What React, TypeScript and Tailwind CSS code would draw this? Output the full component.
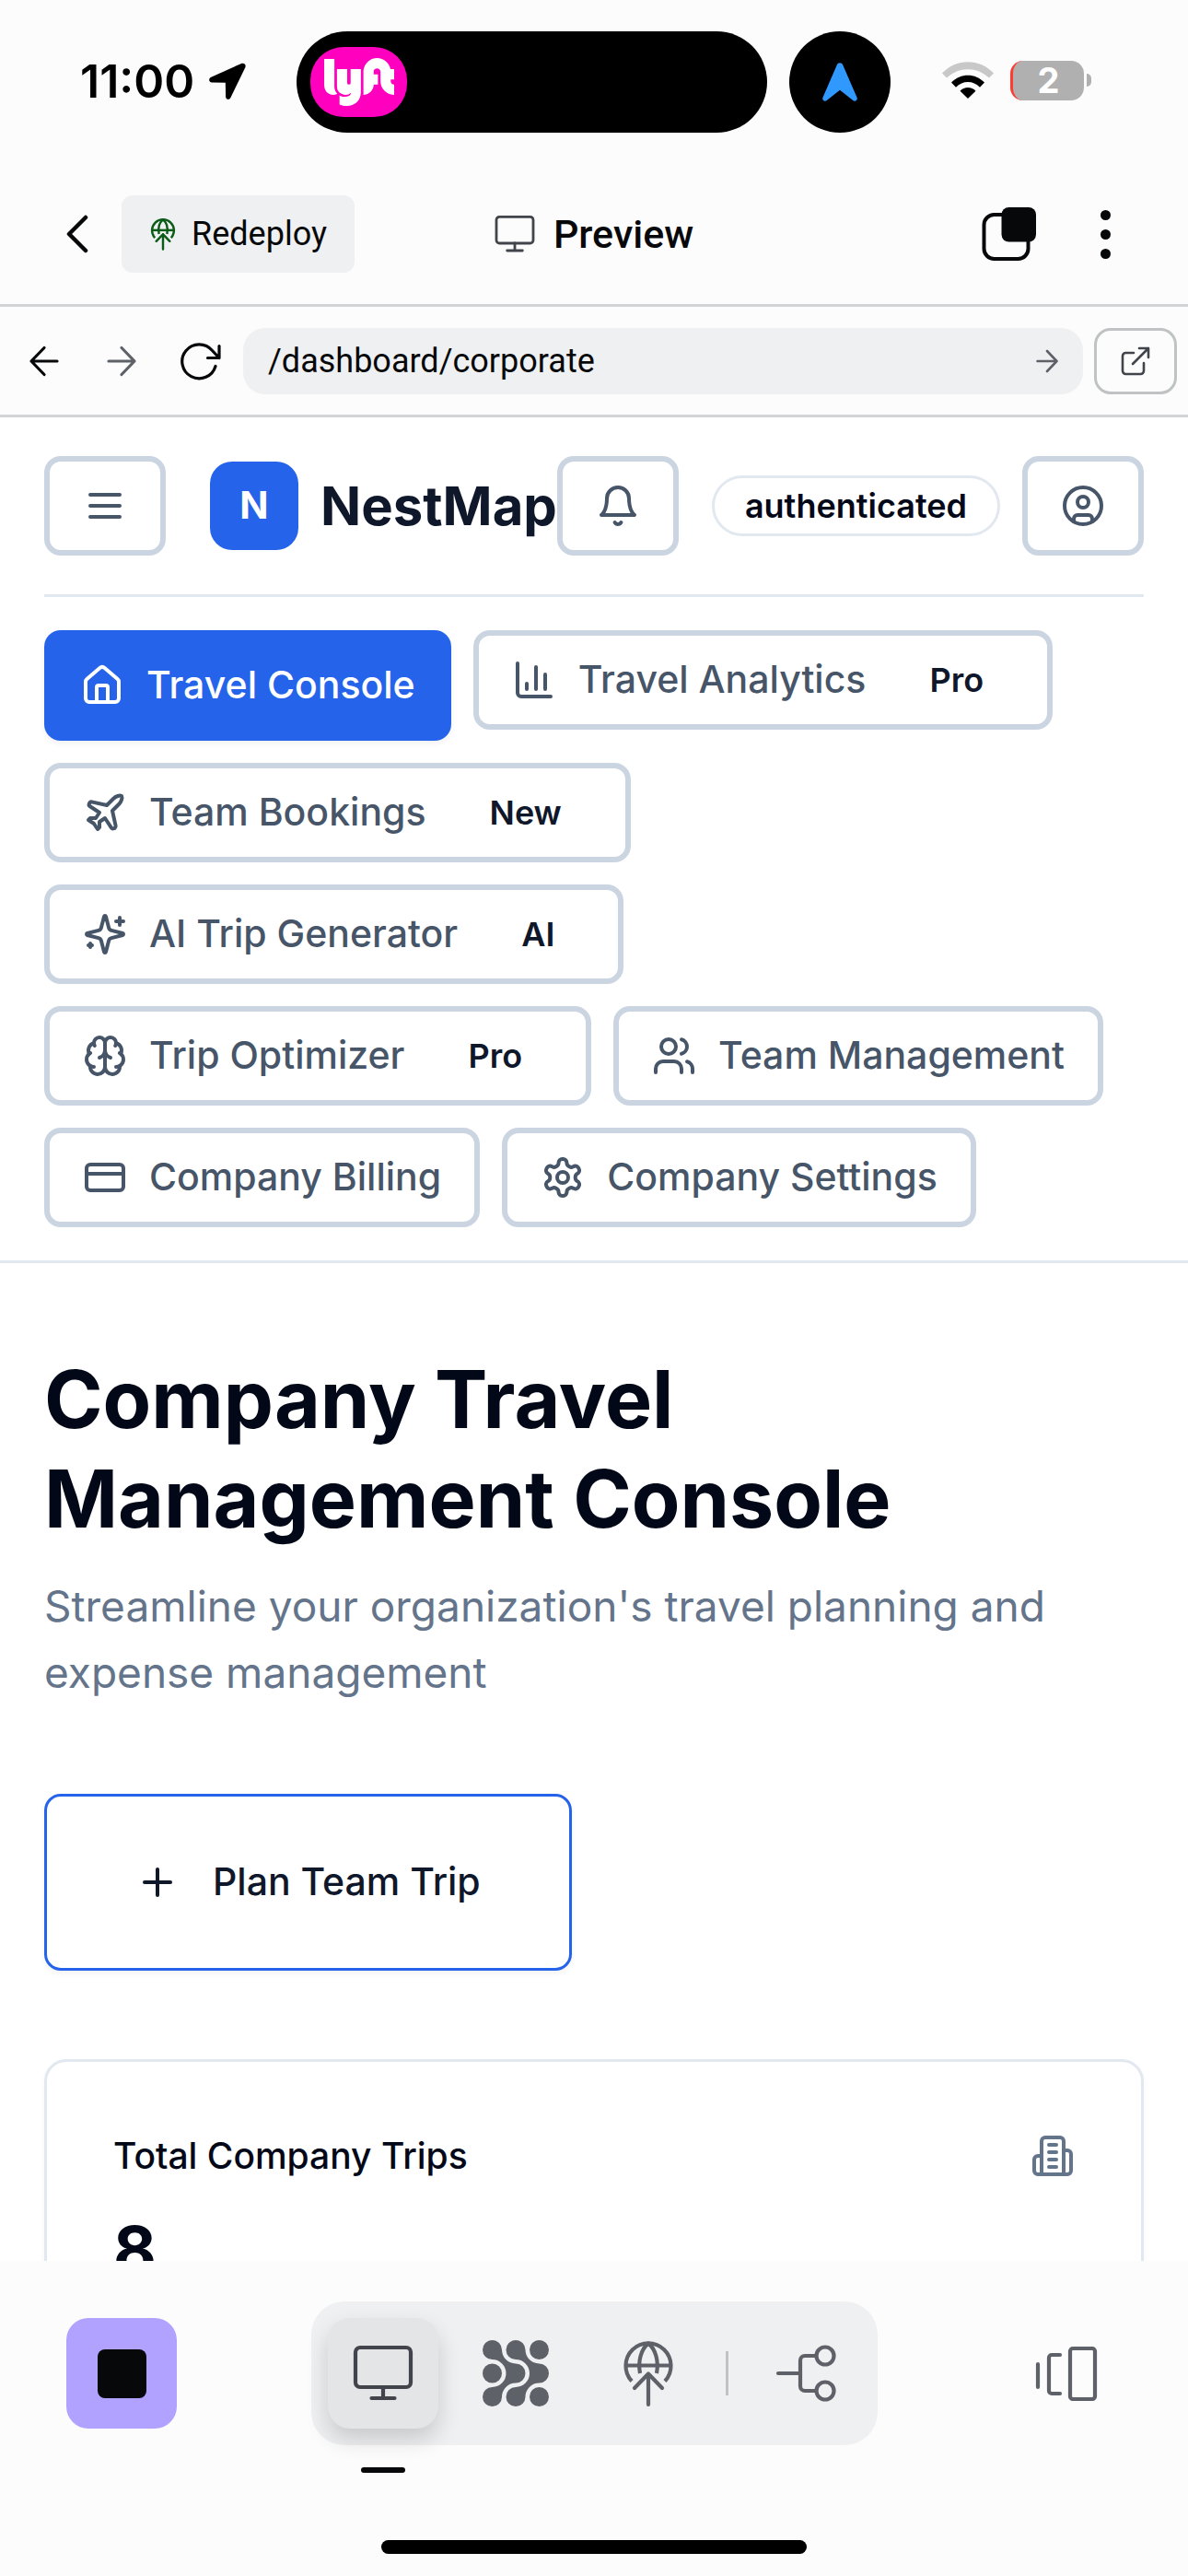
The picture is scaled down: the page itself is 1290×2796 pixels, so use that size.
import React from 'react';
import { House, Plane, Users, CreditCard, CircleUser, Plus } from 'lucide-react';
import { SiLyft } from 'react-icons/si';

const stroke = {
  fill: 'none',
  stroke: 'currentColor',
  strokeLinecap: 'round' as const,
  strokeLinejoin: 'round' as const,
};

function MonitorIcon({ className }: { className: string }) {
  return (
    <svg viewBox="0 0 66 62" className={className} {...stroke} strokeWidth="4.2" aria-hidden="true">
      <rect x="3" y="3" width="60" height="43" rx="5" />
      <path d="M33 46v12M20.500 58h25" />
    </svg>
  );
}

function DeployIcon({ className, width }: { className: string; width: number }) {
  return (
    <svg viewBox="0 0 56 74" className={className} {...stroke} strokeWidth={width} aria-hidden="true">
      <path d="M10 45.500A24.500 24.500 0 1 1 46 45.500" strokeLinecap="butt" />
      <path d="M4 28.500h48" strokeLinecap="butt" />
      <path d="M19 37C16.500 24 20 11 28 4.500C36 11 39.500 24 37 37" strokeLinecap="butt" />
      <path d="M28 71V37.500M13 53l15-15.500L43 53" />
    </svg>
  );
}

function LocationArrow() {
  return (
    <svg viewBox="0 0 40 40" className="size-10" fill="currentColor" aria-hidden="true">
      <path d="M34.500 1.200 2.200 15.800C-.8 17.200-.4 21.300 3 21.500l14.800.3.300 15.200c.1 3.200 3.900 3.900 5.300 1L39.300 5.200C40.700 2 37.700-.3 34.500 1.200Z" />
    </svg>
  );
}

function WifiIcon() {
  return (
    <svg viewBox="0 0 56 40" className="h-10 w-14" aria-hidden="true">
      <path d="M0 12.500C15-4 41-4 56 12.500l-5 5C38 5 18 5 5 17.500Z" fill="#c8c8c8" />
      <path d="M10 22.500C20 12 36 12 46 22.500l-5 5.200C34 20 22 20 15 27.700Z" fill="#000" />
      <path d="M19.500 31.800c4.500-5 12.500-5 17 0L28 40Z" fill="#000" />
    </svg>
  );
}

function StatusBar() {
  return (
    <div className="flex h-[178px] items-start pt-[34px] pl-[87px]">
      <div className="flex h-[108px] w-[235px] items-center gap-4">
        <span className="font-[Inter] text-[50px] leading-none font-semibold">11:00</span>
        <LocationArrow />
      </div>
      <div className="flex h-[110px] w-[511px] items-center rounded-full bg-black pl-[15px]">
        <span className="flex h-[76px] w-[105px] items-center justify-center rounded-[36px] bg-[#ff00bf] text-white">
          <SiLyft className="size-[76px]" aria-label="Lyft" />
        </span>
      </div>
      <div className="ml-6 flex size-[110px] items-center justify-center rounded-full bg-black">
        <svg viewBox="0 0 38 42" className="h-[42px] w-[38px]" fill="#3099ff" aria-hidden="true">
          <path d="M15.800 2.600c1-3.200 5.400-3.200 6.400 0L37.600 38c1 2.800-2.200 4.800-4.300 2.900L19 29.800 4.700 40.900C2.600 42.800-.6 40.800.4 38Z" />
        </svg>
      </div>
      <div className="ml-14 flex h-[106px] items-center">
        <WifiIcon />
        <span className="ml-[18px] flex h-[43px] w-20 items-center justify-center rounded-[14px] border-l-[3px] border-[#ff3b30] bg-[#b0b0b0] font-[Inter] text-[38px] leading-none font-bold text-white">2</span>
        <span className="ml-[3px] h-[14px] w-[5px] rounded-r-full bg-[#b0b0b0]" />
      </div>
    </div>
  );
}

function TitleBar() {
  return (
    <header className="grid h-[152px] grid-cols-3 items-center px-[72px] font-[Roboto] text-[#07080a]">
      <div className="flex items-center gap-9">
        <button type="button" aria-label="Back">
          <svg viewBox="0 0 24 42" className="h-[42px] w-6" {...stroke} strokeWidth="4.500" aria-hidden="true">
            <path d="M21 3 3 21l18 18" />
          </svg>
        </button>
        <button type="button" className="flex h-[84px] items-center gap-4 rounded-xl bg-[#eff0f2] px-[30px] text-4xl">
          <DeployIcon className="h-9 w-[30px] text-[#0b5c16]" width={5} />
          Redeploy
        </button>
      </div>
      <h1 className="flex items-center justify-center gap-5 text-[43px] font-medium">
        <MonitorIcon className="h-[42px] w-[44px] text-[#42444c]" />
        Preview
      </h1>
      <div className="flex items-center justify-end gap-14">
        <button type="button" aria-label="Tabs">
          <svg viewBox="0 0 60 60" className="size-[60px]" aria-hidden="true">
            <rect x="2.500" y="9" width="48" height="48" rx="11" {...stroke} strokeWidth="4" />
            <rect x="21.500" y="1" width="37.500" height="37.500" rx="8" fill="currentColor" />
          </svg>
        </button>
        <button type="button" aria-label="More options" className="flex w-9 flex-col items-center gap-[10px]">
          <span className="size-[11px] rounded-full bg-current" />
          <span className="size-[11px] rounded-full bg-current" />
          <span className="size-[11px] rounded-full bg-current" />
        </button>
      </div>
    </header>
  );
}

function AddressBar() {
  return (
    <form className="flex h-[123px] items-center border-y-[3px] border-[#d2d4d6] pr-3 pl-[30px] text-[#07080a]" onSubmit={(e) => e.preventDefault()}>
      <button type="button" aria-label="Go back">
        <svg viewBox="0 0 36 36" className="size-9" {...stroke} strokeWidth="3.200" aria-hidden="true">
          <path d="M32 18H4M18 3.500 4 18l14 14.500" />
        </svg>
      </button>
      <button type="button" aria-label="Go forward" className="ml-12 text-[#5f6169]">
        <svg viewBox="0 0 36 36" className="size-9" {...stroke} strokeWidth="3.200" aria-hidden="true">
          <path d="M4 18h28M18 3.500 32 18 18 32.500" />
        </svg>
      </button>
      <button type="button" aria-label="Reload" className="ml-[45px]">
        <svg viewBox="0 0 45 42" className="h-[42px] w-[45px]" {...stroke} strokeWidth="3.200" aria-hidden="true">
          <path d="M39 26.500A18.500 18.500 0 1 1 35.500 9.500L43 17.500M43 4.500v13H30.500" />
        </svg>
      </button>
      <div className="ml-6 flex h-[72px] min-w-0 flex-1 items-center rounded-3xl bg-[#eff0f2] px-[27px]">
        <input type="text" aria-label="Page address" defaultValue="/dashboard/corporate" className="h-[72px] min-w-0 flex-1 bg-transparent font-[Roboto] text-4xl outline-none" />
        <button type="submit" aria-label="Go">
          <svg viewBox="0 0 24 26" className="h-[26px] w-6 text-[#5f6169]" {...stroke} strokeWidth="2.600" aria-hidden="true">
            <path d="M1.500 13h21M12 2l10.500 11L12 24" />
          </svg>
        </button>
      </div>
      <button type="button" aria-label="Open in new tab" className="ml-3 flex h-[72px] w-[90px] items-center justify-center rounded-[18px] border-[3px] border-[#bfc3c3] text-[#42444c]">
        <svg viewBox="0 0 32 32" className="size-8" {...stroke} strokeWidth="2.600" aria-hidden="true">
          <path d="M14 7H5.500A3.500 3.500 0 0 0 2 10.500v16A3.500 3.500 0 0 0 5.500 30h16a3.500 3.500 0 0 0 3.500-3.500V18M13 19 30 2M20 2h10v10" />
        </svg>
      </button>
    </form>
  );
}

type IconProps = { className?: string };

function LineIcon({ className, children }: IconProps & { children: React.ReactNode }) {
  return (
    <svg viewBox="0 0 24 24" className={className} {...stroke} strokeWidth="2" aria-hidden="true">
      {children}
    </svg>
  );
}

const MenuIcon = ({ className }: IconProps) => (
  <LineIcon className={className}>
    <path d="M4 6h16M4 12h16M4 18h16" />
  </LineIcon>
);

const BellIcon = ({ className }: IconProps) => (
  <LineIcon className={className}>
    <path d="M6 8a6 6 0 0 1 12 0c0 7 3 9 3 9H3s3-2 3-9" />
    <path d="M10.300 21a1.940 1.940 0 0 0 3.400 0" />
  </LineIcon>
);

const AnalyticsIcon = ({ className }: IconProps) => (
  <LineIcon className={className}>
    <path d="M3 3v16a2 2 0 0 0 2 2h16M18 17V9M13 17V5M8 17v-3" />
  </LineIcon>
);

const SparklesIcon = ({ className }: IconProps) => (
  <LineIcon className={className}>
    <path d="M9.937 15.500A2 2 0 0 0 8.500 14.063l-6.135-1.582a.5.5 0 0 1 0-.962L8.500 9.936A2 2 0 0 0 9.937 8.500l1.582-6.135a.5.5 0 0 1 .963 0L14.063 8.500A2 2 0 0 0 15.500 9.937l6.135 1.581a.5.5 0 0 1 0 .964L15.500 14.063a2 2 0 0 0-1.437 1.437l-1.582 6.135a.5.5 0 0 1-.963 0z" />
    <path d="M20 3v4M22 5h-4M4 17v2M5 18H3" />
  </LineIcon>
);

const BrainIcon = ({ className }: IconProps) => (
  <LineIcon className={className}>
    <path d="M12 5a3 3 0 1 0-5.997.125 4 4 0 0 0-2.526 5.770 4 4 0 0 0 .556 6.588A4 4 0 1 0 12 18Z" />
    <path d="M12 5a3 3 0 1 1 5.997.125 4 4 0 0 1 2.526 5.770 4 4 0 0 1-.556 6.588A4 4 0 1 1 12 18Z" />
    <path d="M15 13a4.500 4.500 0 0 1-3-4 4.500 4.500 0 0 1-3 4" />
    <path d="M17.599 6.500a3 3 0 0 0 .399-1.375M6.003 5.125A3 3 0 0 0 6.401 6.500M3.477 10.896a4 4 0 0 1 .585-.396M19.938 10.500a4 4 0 0 1 .585.396M6 18a4 4 0 0 1-1.967-.516M19.967 17.484A4 4 0 0 1 18 18" />
  </LineIcon>
);

const SettingsIcon = ({ className }: IconProps) => (
  <LineIcon className={className}>
    <path d="M12.220 2h-.44a2 2 0 0 0-2 2v.18a2 2 0 0 1-1 1.730l-.43.25a2 2 0 0 1-2 0l-.15-.08a2 2 0 0 0-2.730.73l-.22.38a2 2 0 0 0 .73 2.730l.15.1a2 2 0 0 1 1 1.720v.51a2 2 0 0 1-1 1.740l-.15.09a2 2 0 0 0-.73 2.730l.22.38a2 2 0 0 0 2.730.73l.15-.08a2 2 0 0 1 2 0l.43.25a2 2 0 0 1 1 1.730V20a2 2 0 0 0 2 2h.44a2 2 0 0 0 2-2v-.18a2 2 0 0 1 1-1.730l.43-.25a2 2 0 0 1 2 0l.15.08a2 2 0 0 0 2.730-.73l.22-.39a2 2 0 0 0-.73-2.730l-.15-.08a2 2 0 0 1-1-1.740v-.5a2 2 0 0 1 1-1.740l.15-.09a2 2 0 0 0 .73-2.730l-.22-.38a2 2 0 0 0-2.730-.73l-.15.08a2 2 0 0 1-2 0l-.43-.25a2 2 0 0 1-1-1.730V4a2 2 0 0 0-2-2z" />
    <circle cx="12" cy="12" r="3" />
  </LineIcon>
);

const BuildingIcon = ({ className }: IconProps) => (
  <LineIcon className={className}>
    <path d="M6 22V4a2 2 0 0 1 2-2h8a2 2 0 0 1 2 2v18Z" />
    <path d="M6 12H4a2 2 0 0 0-2 2v6a2 2 0 0 0 2 2h2M18 9h2a2 2 0 0 1 2 2v9a2 2 0 0 1-2 2h-2" />
    <path d="M10 6h4M10 10h4M10 14h4M10 18h4" />
  </LineIcon>
);

const squareButton =
  'flex h-[108px] w-[132px] shrink-0 items-center justify-center rounded-[18px] border-6 border-[#cbd5e1] text-[#475569]';

function AppHeader() {
  return (
    <div className="mx-12 flex items-center border-b-[3px] border-[#e2e8f0] py-[42px]">
      <button type="button" aria-label="Open menu" className={squareButton}>
        <MenuIcon className="size-12" />
      </button>
      <span className="ml-12 flex size-24 shrink-0 items-center justify-center rounded-3xl bg-[#2563eb] text-[41px] font-bold text-white">N</span>
      <span className="ml-6 min-w-0 flex-1 text-[58px] leading-[84px] font-bold text-[#0f172a]">NestMap</span>
      <button type="button" aria-label="Notifications" className={squareButton}>
        <BellIcon className="size-12" />
      </button>
      <span className="ml-9 flex h-[66px] items-center rounded-full border-[3px] border-[#e2e8f0] px-[33px] text-4xl font-semibold text-[#020817]">authenticated</span>
      <button type="button" aria-label="Account" className={`ml-6 ${squareButton}`}>
        <CircleUser className="size-12" />
      </button>
    </div>
  );
}

type NavItem = { label: string; icon: React.ComponentType<IconProps>; badge?: string; active?: boolean };

const navItems: NavItem[] = [
  { label: 'Travel Console', icon: House, active: true },
  { label: 'Travel Analytics', icon: AnalyticsIcon, badge: 'Pro' },
  { label: 'Team Bookings', icon: Plane, badge: 'New' },
  { label: 'AI Trip Generator', icon: SparklesIcon, badge: 'AI' },
  { label: 'Trip Optimizer', icon: BrainIcon, badge: 'Pro' },
  { label: 'Team Management', icon: Users },
  { label: 'Company Billing', icon: CreditCard },
  { label: 'Company Settings', icon: SettingsIcon },
];

function Nav() {
  return (
    <nav className="flex flex-wrap items-start gap-6 border-b-[3px] border-[#e2e8f0] px-12 py-9">
      {navItems.map(({ label, icon: Icon, badge, active }) => (
        <button
          key={label}
          type="button"
          aria-current={active ? 'page' : undefined}
          className={
            active
              ? 'flex h-[120px] items-center gap-6 rounded-[18px] bg-[#2563eb] px-[39px] text-[41px] font-medium text-white shadow-[0_3px_6px_rgba(0,0,0,0.06)]'
              : 'flex h-[108px] items-center gap-6 rounded-[18px] border-6 border-[#cbd5e1] px-9 text-[41px] font-medium text-[#475569]'
          }
        >
          <Icon className="size-12" />
          {label}
          {badge && <span className="ml-3 px-[33px] text-4xl font-semibold text-[#0f172a]">{badge}</span>}
        </button>
      ))}
    </nav>
  );
}

function Content() {
  return (
    <main className="min-h-0 flex-1 overflow-hidden px-12 pt-[94px]">
      <h2 className="max-w-[1000px] text-[86px] leading-[108px] font-bold text-[#020817]">
        Company Travel Management Console
      </h2>
      <p className="mt-[26px] text-[46px] leading-[72px] text-[#64748b]">
        Streamline your organization&apos;s travel planning and expense management
      </p>
      <button type="button" className="mt-24 flex h-48 items-center gap-9 rounded-[18px] border-[3px] border-[#2563eb] px-24 text-[41px] font-medium text-[#0f172a] shadow-[0_3px_6px_rgba(0,0,0,0.05)]">
        <Plus className="size-12" />
        Plan Team Trip
      </button>
      <section className="mt-24 rounded-3xl border-[3px] border-[#e2e8f0] px-[72px] pt-[72px] pb-24 text-[#020817] shadow-[0_3px_6px_rgba(0,0,0,0.04)]">
        <div className="flex items-center justify-between">
          <h3 className="text-[39px] leading-[60px] font-medium">Total Company Trips</h3>
          <BuildingIcon className="size-12 text-[#64748b]" />
        </div>
        <p className="mt-6 text-[72px] leading-[96px] font-bold">8</p>
      </section>
    </main>
  );
}

function GridIcon() {
  return (
    <svg viewBox="0 0 72 72" className="size-[72px]" fill="currentColor" aria-hidden="true">
      <circle cx="61.500" cy="10.500" r="10.500" />
      <circle cx="10.500" cy="36" r="10.500" />
      <circle cx="61.500" cy="61.500" r="10.500" />
      <path d="M10.500 0A10.500 10.500 0 0 1 21 10.500A15 15 0 0 0 36 25.500A10.500 10.500 0 0 1 36 46.500A15 15 0 0 0 21 61.500A10.500 10.500 0 1 1 10.500 51A15 15 0 0 0 10.500 21A10.500 10.500 0 0 1 10.500 0Z" />
      <path d="M36 0A10.500 10.500 0 0 1 46.500 10.500A15 15 0 0 0 61.500 25.500A10.500 10.500 0 0 1 61.500 46.500A15 15 0 0 0 46.500 61.500A10.500 10.500 0 1 1 36 51A15 15 0 0 0 36 21A10.500 10.500 0 0 1 36 0Z" />
    </svg>
  );
}

function BottomBar() {
  return (
    <footer className="bg-[#fcfcfc] pt-11 text-[#5f6169]">
      <div className="grid grid-cols-[1fr_auto_1fr] items-center px-[72px]">
        <button type="button" aria-label="Stop" className="flex size-[120px] items-center justify-center rounded-3xl bg-[#b1a2ff]">
          <span className="size-[53px] rounded-lg bg-[#07080a]" />
        </button>
        <div className="flex h-[156px] items-center rounded-[36px] bg-[#eff0f2] px-[18px]">
          <button type="button" aria-label="Preview" aria-pressed="true" className="relative flex size-[120px] items-center justify-center rounded-3xl bg-[#e4e5e7] text-[#42444c] shadow-[0_12px_24px_rgba(0,0,0,0.16)]">
            <MonitorIcon className="h-[62px] w-[66px]" />
            <span className="absolute -bottom-12 h-[6px] w-12 rounded-full bg-[#07080a]" />
          </button>
          <button type="button" aria-label="Agent" className="ml-6 flex size-[120px] items-center justify-center">
            <GridIcon />
          </button>
          <button type="button" aria-label="Deployments" className="ml-6 flex size-[120px] items-center justify-center">
            <DeployIcon className="h-[74px] w-14" width={4.2} />
          </button>
          <span className="mx-6 h-12 w-[3px] bg-[#c0c2c5]" />
          <button type="button" aria-label="Branches" className="flex size-[120px] items-center justify-center">
            <svg viewBox="0 0 66 66" className="size-[66px]" {...stroke} strokeWidth="4.200" aria-hidden="true">
              <path d="M3 33h24M44 14H32a5 5 0 0 0-5 5v28a5 5 0 0 0 5 5h12" />
              <circle cx="54" cy="14" r="9.500" />
              <circle cx="54" cy="52" r="9.500" />
            </svg>
          </button>
        </div>
        <button type="button" aria-label="Switch panes" className="flex w-[120px] items-center justify-center justify-self-end">
          <svg viewBox="0 0 70 60" className="h-[60px] w-[70px]" {...stroke} strokeWidth="4.200" aria-hidden="true">
            <path d="M4 20v25M28 10H19a3 3 0 0 0-3 3v36a3 3 0 0 0 3 3h9" />
            <rect x="39" y="3" width="27" height="55" rx="3" />
          </svg>
        </button>
      </div>
      <div className="mx-auto mt-[103px] mb-6 h-[15px] w-[462px] rounded-full bg-black" />
    </footer>
  );
}

export default function App() {
  return (
    <div className="flex h-screen flex-col overflow-hidden bg-white font-[Inter,sans-serif]">
      <div className="shrink-0 bg-[#fcfcfc]">
        <StatusBar />
        <TitleBar />
        <AddressBar />
      </div>
      <div className="shrink-0">
        <AppHeader />
        <Nav />
      </div>
      <Content />
      <BottomBar />
    </div>
  );
}
